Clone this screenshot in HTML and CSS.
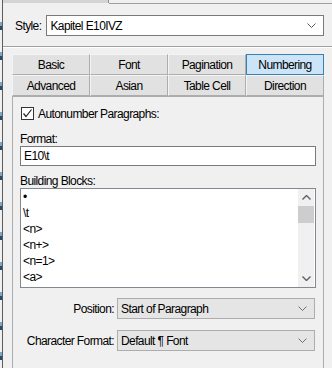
FILE: index.html
```html
<!DOCTYPE html>
<html lang="en">
<head>
  <meta charset="UTF-8">
  <title>Paragraph Designer - Numbering</title>
  <link rel="stylesheet" href="styles.css">
</head>
<body>

  <div class="page">
    <div class="edge"></div>
    <div class="window">

      <div class="strip">
        <div class="cut"></div>
        <div class="rest"></div>
      </div>

      <div class="style-row">
        <label>Style:</label>
        <div class="combo white">
          <span>Kapitel E10IVZ</span>
          <svg class="chev" width="9" height="5" viewBox="0 0 9 5"><path d="M0.5 0.5 L4.5 4.5 L8.5 0.5" fill="none" stroke="#5a5a5a" stroke-width="1"/></svg>
        </div>
      </div>

      <div class="sep"></div>

      <div class="tabs">
        <div class="tab">Basic</div>
        <div class="tab">Font</div>
        <div class="tab">Pagination</div>
        <div class="tab active">Numbering</div>
        <div class="tab">Advanced</div>
        <div class="tab">Asian</div>
        <div class="tab">Table Cell</div>
        <div class="tab">Direction</div>
      </div>

      <div class="panel">
        <div class="check-row">
          <span class="box">
            <svg width="11" height="11" viewBox="0 0 11 11"><path d="M1.5 5.5 L4 8.5 L9.5 1.5" fill="none" stroke="#222" stroke-width="1.2"/></svg>
          </span>
          <span>Autonumber Paragraphs:</span>
        </div>

        <div class="label first">Format:</div>
        <div class="field">E10\t</div>

        <div class="label">Building Blocks:</div>
        <div class="list">
          <ul class="items">
            <li>•</li>
            <li>\t</li>
            <li>&lt;n&gt;</li>
            <li>&lt;n+&gt;</li>
            <li>&lt;n=1&gt;</li>
            <li>&lt;a&gt;</li>
          </ul>
          <div class="scroll">
            <div class="arrow">
              <svg width="9" height="5" viewBox="0 0 9 5"><path d="M0.5 4.5 L4.5 0.5 L8.5 4.5" fill="none" stroke="#606060" stroke-width="1.4"/></svg>
            </div>
            <div class="thumb"></div>
            <div class="track"></div>
            <div class="arrow">
              <svg width="9" height="5" viewBox="0 0 9 5"><path d="M0.5 0.5 L4.5 4.5 L8.5 0.5" fill="none" stroke="#606060" stroke-width="1.4"/></svg>
            </div>
          </div>
        </div>

        <div class="props">
          <label>Position:</label>
          <div class="combo grey">
            <span>Start of Paragraph</span>
            <svg class="chev" width="9" height="5" viewBox="0 0 9 5"><path d="M0.5 0.5 L4.5 4.5 L8.5 0.5" fill="none" stroke="#707070" stroke-width="1"/></svg>
          </div>
          <label>Character Format:</label>
          <div class="combo grey">
            <span>Default ¶ Font</span>
            <svg class="chev" width="9" height="5" viewBox="0 0 9 5"><path d="M0.5 0.5 L4.5 4.5 L8.5 0.5" fill="none" stroke="#707070" stroke-width="1"/></svg>
          </div>
        </div>
      </div>

    </div>
  </div>

</body>
</html>
```

FILE: styles.css
```css
body {
  margin: 0;
  background-color: #f0f0f0;
  color: #000;
  font-family: "Liberation Sans", Arial, sans-serif;
  font-size: 12px;
  letter-spacing: -0.6px;
  width: 332px;
  height: 368px;
  overflow: hidden;
}

.page {
  display: flex;
  height: 368px;
}

.edge {
  width: 2px;
  background: repeating-linear-gradient(#f0f0f0 0, #f0f0f0 22px, #7fa7c4 22px, #7fa7c4 26px, #2b4a66 26px, #2b4a66 30px);
}

.window {
  flex: 1;
  display: flex;
  flex-direction: column;
  border-left: 1px solid #5c5c5c;
}

/* clipped tab strip at the very top */
.strip {
  display: flex;
  height: 4px;
}

.cut {
  width: 105px;
  height: 3px;
  background-color: #d4d4d4;
  border-right: 1px solid #8c8c8c;
}

.rest {
  flex: 1;
  height: 3px;
  border-bottom: 1px solid #a0a0a0;
}

.style-row {
  display: flex;
  align-items: center;
  gap: 5px;
  padding: 11px 8px 0 12px;
}

.combo {
  display: flex;
  align-items: center;
  justify-content: space-between;
  box-sizing: border-box;
  height: 21px;
  padding: 0 7px 0 3px;
}

.combo.white {
  flex: 1;
  background-color: #fff;
  border: 1px solid #7a7a7a;
}

.combo.grey {
  background-color: #e5e5e5;
  border: 1px solid #adadad;
  margin-right: 1px;
}

.sep {
  margin-top: 10px;
  height: 1px;
  border-top: 1px solid #a0a0a0;
  background-color: #fff;
}

.tabs {
  display: grid;
  grid-template-columns: repeat(4, 78px);
  grid-auto-rows: 21px;
  margin: 6px 0 0 9px;
}

.tab {
  box-sizing: border-box;
  display: flex;
  align-items: center;
  justify-content: center;
  background-color: #e1e1e1;
  border: 1px solid #adadad;
  border-left-color: #f4f4f4;
  border-top-color: #f4f4f4;
}

.tab.active {
  background-color: #cce4f7;
  border-color: #3c7fb1;
}

.panel {
  box-sizing: border-box;
  width: 312px;
  margin-left: 9px;
  flex: 1;
  padding: 10px 7px 0 7px;
  border: 1px solid #adadad;
  border-bottom: none;
}

.check-row {
  display: flex;
  align-items: center;
  gap: 4px;
  height: 13px;
  padding-left: 1px;
}

.box {
  box-sizing: border-box;
  width: 13px;
  height: 13px;
  border: 1px solid #333;
  background-color: #fff;
  display: flex;
  align-items: center;
  justify-content: center;
}

.label {
  line-height: 14px;
  margin-top: 8px;
}

.label.first {
  margin-top: 12px;
}

.field {
  box-sizing: border-box;
  height: 20px;
  line-height: 18px;
  padding-left: 3px;
  background-color: #fff;
  border: 1px solid #7a7a7a;
}

.list {
  display: flex;
  box-sizing: border-box;
  height: 100px;
  background-color: #fff;
  border: 1px solid #828790;
}

.items {
  flex: 1;
  list-style: none;
  margin: 0;
  padding: 0 0 0 2px;
}

.items li {
  height: 16px;
  line-height: 16px;
}

.scroll {
  width: 16px;
  margin-right: 1px;
  display: flex;
  flex-direction: column;
  background-color: #f0f0f0;
}

.arrow {
  height: 17px;
  display: flex;
  align-items: center;
  justify-content: center;
}

.thumb {
  height: 17px;
  background-color: #cdcdcd;
}

.track {
  flex: 1;
}

.props {
  display: grid;
  grid-template-columns: 94px 1fr;
  column-gap: 3px;
  row-gap: 11px;
  align-items: center;
  margin-top: 10px;
}

.props label {
  text-align: right;
  white-space: nowrap;
}
```
